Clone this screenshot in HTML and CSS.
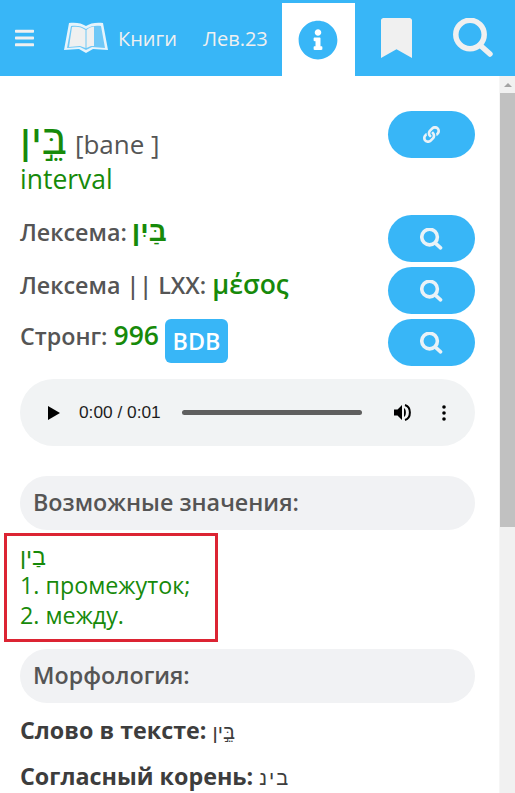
FILE: index.html
```html
<!DOCTYPE html>
<html lang="ru">
<head>
  <meta charset="UTF-8">
  <meta name="viewport" content="width=device-width, initial-scale=1.0">
  <title>Книги - Лев.23</title>
  <link rel="stylesheet" href="styles.css">
</head>
<body>
  <div class="header">
    <a class="nav-bars">
      <svg viewBox="0 0 448 512"><path d="M16 132h416c8.837 0 16-7.163 16-16V76c0-8.837-7.163-16-16-16H16C7.163 60 0 67.163 0 76v40c0 8.837 7.163 16 16 16zm0 160h416c8.837 0 16-7.163 16-16v-40c0-8.837-7.163-16-16-16H16c-8.837 0-16 7.163-16 16v40c0 8.837 7.163 16 16 16zm0 160h416c8.837 0 16-7.163 16-16v-40c0-8.837-7.163-16-16-16H16c-8.837 0-16 7.163-16 16v40c0 8.837 7.163 16 16 16z"/></svg>
    </a>
    <a class="nav-books">
      <svg viewBox="0 0 44 32">
        <path class="book-cover" d="M5 1 C11 0 18 1 22 4 C26 1 33 0 39 1 L44 28 L29 27 L22 31 L15 27 L0 28 Z"/>
        <path class="book-gap" d="M7 4 C12 3 18 4 22 7 C26 4 32 3 37 4 L41 26 L28 25 L22 28 L16 25 L3 26 Z"/>
        <path class="book-left" d="M8 5 C13 4 18 5 21.500 8 V26 L16 24 L5 25 Z"/>
        <path class="book-left" d="M22.500 8 C25 6 27 5 30 4.600 V24 L27 24 L22.500 26 Z"/>
      </svg>
      <span>Книги</span>
    </a>
    <a class="nav-chapter">Лев.23</a>
    <a class="nav-tab">
      <svg viewBox="0 0 512 512"><path d="M256 8C119.043 8 8 119.083 8 256c0 136.997 111.043 248 248 248s248-111.003 248-248C504 119.083 392.957 8 256 8zm0 110c23.196 0 42 18.804 42 42s-18.804 42-42 42-42-18.804-42-42 18.804-42 42-42zm56 254c0 6.627-5.373 12-12 12h-88c-6.627 0-12-5.373-12-12v-24c0-6.627 5.373-12 12-12h12v-64h-12c-6.627 0-12-5.373-12-12v-24c0-6.627 5.373-12 12-12h64c6.627 0 12 5.373 12 12v100h12c6.627 0 12 5.373 12 12v24z"/></svg>
    </a>
    <a class="nav-bookmark">
      <svg viewBox="0 0 384 512" preserveAspectRatio="none"><path d="M0 512V32C0 14 14 0 32 0h320c18 0 32 14 32 32v480L192 400 0 512z"/></svg>
    </a>
    <a class="nav-search">
      <svg viewBox="0 0 41 40"><circle cx="17" cy="16.500" r="14.200"/><line x1="28" y1="28" x2="37" y2="36"/></svg>
    </a>
  </div>

  <div class="main">
    <div class="content">
      <div class="row row-word">
        <div>
          <div class="word"><span class="hebrew word-heb" dir="rtl">בֵּ֣ין</span><span class="translit">[bane ]</span></div>
          <div class="gloss">interval</div>
        </div>
        <a class="btn">
          <svg class="btn-link" viewBox="0 0 512 512"><path d="M326.612 185.391c59.747 59.809 58.927 155.698.36 214.59-.11.12-.24.25-.36.37l-67.2 67.2c-59.27 59.27-155.699 59.262-214.96 0-59.27-59.26-59.27-155.7 0-214.96l37.106-37.106c9.84-9.84 26.786-3.3 27.294 10.606.648 17.722 3.826 35.527 9.69 52.721 1.986 5.822.567 12.262-3.783 16.612l-13.087 13.087c-28.026 28.026-28.905 73.66-1.155 101.96 28.024 28.579 74.086 28.749 102.325.51l67.2-67.19c28.191-28.191 28.073-73.757 0-101.83-3.701-3.694-7.429-6.564-10.341-8.569a16.037 16.037 0 0 1-6.947-12.606c-.396-10.567 3.348-21.456 11.698-29.806l21.054-21.055c5.521-5.521 14.182-6.199 20.584-1.731a152.482 152.482 0 0 1 20.522 17.197zM467.547 44.449c-59.261-59.262-155.69-59.27-214.96 0l-67.2 67.2c-.12.12-.25.25-.36.37-58.566 58.892-59.387 154.781.36 214.59a152.454 152.454 0 0 0 20.521 17.196c6.402 4.468 15.064 3.789 20.584-1.731l21.054-21.055c8.35-8.35 12.094-19.239 11.698-29.806a16.037 16.037 0 0 0-6.947-12.606c-2.912-2.005-6.64-4.875-10.341-8.569-28.073-28.073-28.191-73.639 0-101.83l67.2-67.19c28.239-28.239 74.3-28.069 102.325.51 27.75 28.3 26.872 73.934-1.155 101.96l-13.087 13.087c-4.35 4.35-5.769 10.79-3.783 16.612 5.864 17.194 9.042 34.999 9.69 52.721.509 13.906 17.454 20.446 27.294 10.606l37.106-37.106c59.271-59.259 59.271-155.699.001-214.959z"/></svg>
        </a>
      </div>

      <div class="row">
        <div class="label">Лексема: <b class="hebrew green lexeme" dir="rtl">בַּיִן</b></div>
        <a class="btn"><svg class="btn-search" viewBox="0 0 41 40"><circle cx="17" cy="16.500" r="14.200"/><line x1="28" y1="28" x2="37" y2="36"/></svg></a>
      </div>
      <div class="row">
        <div class="label">Лексема || LXX: <b class="green big">μέσος</b></div>
        <a class="btn"><svg class="btn-search" viewBox="0 0 41 40"><circle cx="17" cy="16.500" r="14.200"/><line x1="28" y1="28" x2="37" y2="36"/></svg></a>
      </div>
      <div class="row">
        <div class="label strong">
          <span>Стронг: <b class="green big">996</b></span>
          <a class="bdb">BDB</a>
        </div>
        <a class="btn"><svg class="btn-search" viewBox="0 0 41 40"><circle cx="17" cy="16.500" r="14.200"/><line x1="28" y1="28" x2="37" y2="36"/></svg></a>
      </div>

      <div class="player">
        <svg class="player-play" viewBox="0 0 12 14"><path d="M0 0 L12 7 L0 14 Z"/></svg>
        <span class="player-time">0:00 / 0:01</span>
        <div class="player-track"></div>
        <svg class="player-volume" viewBox="0 0 19 19"><path d="M0 6.500 H3.500 L8 2 V17 L3.500 12.500 H0 Z"/><path d="M10 5 C12.500 6.500 12.500 12.500 10 14 Z"/><path class="volume-wave" d="M11 2 C17.500 4 17.500 15 11 17"/></svg>
        <svg class="player-more" viewBox="0 0 4 16"><circle cx="2" cy="2" r="1.800"/><circle cx="2" cy="8" r="1.800"/><circle cx="2" cy="14" r="1.800"/></svg>
      </div>

      <div class="section">Возможные значения:</div>
      <div class="meanings">
        <div class="meanings-word"><span class="hebrew" dir="rtl">בַין</span></div>
        <div>1. промежуток;</div>
        <div>2. между.</div>
      </div>

      <div class="section section-morph">Морфология:</div>
      <div class="fact"><b>Слово в тексте:</b> <span class="hebrew" dir="rtl">בֵּ֣ין</span></div>
      <div class="fact"><b>Согласный корень:</b> <span class="hebrew root" dir="rtl">בינ</span></div>
    </div>

    <div class="scrollbar">
      <div class="scroll-arrow"></div>
      <div class="scroll-thumb"></div>
    </div>
  </div>
</body>
</html>
```

FILE: styles.css
```css
html, body {
  height: 100%;
}

body {
  font-family: "Open Sans", "Noto Sans", sans-serif;
  background-color: #fff;
  color: #555;
  margin: 0;
  padding: 0;
  display: flex;
  flex-direction: column;
  overflow: hidden;
}

.header {
  height: 76px;
  flex: none;
  background-color: #38b6f7;
  color: #f0f0f0;
  display: flex;
  align-items: center;
  font-size: 20px;
}

.nav-bars {
  margin-left: 15px;
  width: 19px;
  display: flex;
}

.nav-bars svg {
  width: 19px;
  height: 22px;
  fill: #f0f0f0;
}

.nav-books {
  margin-left: 30px;
  display: flex;
  align-items: center;
  gap: 10px;
}

.nav-books svg {
  width: 44px;
  height: 32px;
}

.book-cover {
  fill: #e6f4fc;
}

.book-gap {
  fill: #6fc8f7;
}

.book-left {
  fill: #f0f0f0;
}

.nav-chapter {
  margin-left: 26px;
}

.nav-tab {
  margin-left: 14px;
  width: 73px;
  height: 73px;
  margin-top: 3px;
  background-color: #fff;
  display: flex;
  align-items: center;
  justify-content: center;
}

.nav-tab svg {
  width: 40px;
  height: 40px;
  fill: #38b6f7;
}

.nav-bookmark {
  margin-left: 26px;
  display: flex;
}

.nav-bookmark svg {
  width: 31px;
  height: 40px;
  fill: #f0f0f0;
}

.nav-search {
  margin-left: 41px;
  display: flex;
}

.nav-search svg {
  width: 41px;
  height: 40px;
  fill: none;
  stroke: #f0f0f0;
  stroke-width: 5.5;
  stroke-linecap: round;
}

.main {
  flex: 1;
  display: flex;
  min-height: 0;
}

.content {
  flex: 1;
  padding: 35px 24px 0 20px;
  overflow: hidden;
}

.scrollbar {
  width: 16px;
  flex: none;
  background-color: #f1f1f1;
  border-left: 1px solid #f6f6f6;
  box-sizing: border-box;
}

.scroll-arrow {
  height: 17px;
  position: relative;
}

.scroll-arrow:before {
  content: "";
  position: absolute;
  left: 4px;
  top: 7px;
  border-left: 4px solid transparent;
  border-right: 4px solid transparent;
  border-bottom: 4px solid #a3a3a3;
}

.scroll-thumb {
  height: 434px;
  background-color: #c1c1c1;
}

.row {
  display: flex;
  justify-content: space-between;
  align-items: flex-start;
  margin-bottom: 5px;
}

.row-word {
  height: 99px;
}

.btn {
  width: 87px;
  height: 47px;
  flex: none;
  border-radius: 24px;
  background-color: #38b6f7;
  display: flex;
  align-items: center;
  justify-content: center;
}

.btn-link {
  width: 17px;
  height: 17px;
  fill: #eaf2f7;
}

.btn-search {
  width: 23px;
  height: 22px;
  fill: none;
  stroke: #eaf2f7;
  stroke-width: 6.500;
  stroke-linecap: round;
}

.word {
  margin-top: 7px;
  font-size: 26px;
  line-height: 44px;
  height: 46px;
  white-space: nowrap;
}

.word-heb {
  color: #178a0a;
  font-size: 42px;
  margin-right: 8px;
}

.gloss {
  color: #178a0a;
  font-size: 26.500px;
  line-height: 30px;
}

.hebrew {
  font-family: "Liberation Sans", sans-serif;
}

.green {
  color: #178a0a;
}

.label {
  font-size: 23.300px;
  font-weight: 600;
  line-height: 34px;
  white-space: nowrap;
}

.lexeme {
  font-size: 28px;
  margin-left: -1px;
}

.big {
  font-size: 26.500px;
  font-weight: 600;
}

.strong {
  display: flex;
  gap: 6px;
  line-height: 32px;
}

.bdb {
  background-color: #38b6f7;
  color: #fff;
  border-radius: 6px;
  width: 63px;
  height: 44px;
  line-height: 44px;
  text-align: center;
}

.player {
  margin-top: 13px;
  height: 67px;
  border-radius: 34px;
  background-color: #f1f3f4;
  display: flex;
  align-items: center;
  color: #1d1d1d;
}

.player-play {
  margin-left: 28px;
  width: 12px;
  height: 14px;
  fill: #000;
}

.player-time {
  margin-left: 19px;
  width: 103px;
  font-family: "Liberation Sans", sans-serif;
  font-size: 17.300px;
}

.player-track {
  width: 180px;
  height: 5px;
  border-radius: 3px;
  background-color: #5f5f5f;
}

.player-volume {
  margin-left: 32px;
  width: 19px;
  height: 19px;
  fill: #000;
}

.volume-wave {
  fill: none;
  stroke: #000;
  stroke-width: 2;
}

.player-more {
  margin-left: 29px;
  width: 4px;
  height: 16px;
  fill: #000;
}

.section {
  margin-top: 30px;
  height: 54px;
  line-height: 53px;
  border-radius: 27px;
  background-color: #f1f2f4;
  padding-left: 13px;
  font-size: 23.300px;
  font-weight: 600;
}

.meanings {
  margin: 3px 0 0 -16px;
  width: 214px;
  height: 109px;
  box-sizing: border-box;
  border: 3px solid #dc2433;
  padding: 8px 0 0 13px;
  color: #178a0a;
  font-size: 23.300px;
  line-height: 30px;
}

.meanings-word {
  line-height: 25px;
}

.section-morph {
  margin: 7px 0 5px;
}

.fact {
  color: #3d3d3d;
  font-size: 23.300px;
  line-height: 44px;
}

.fact .hebrew {
  font-size: 20px;
}

.fact .root {
  letter-spacing: 2px;
}
```
